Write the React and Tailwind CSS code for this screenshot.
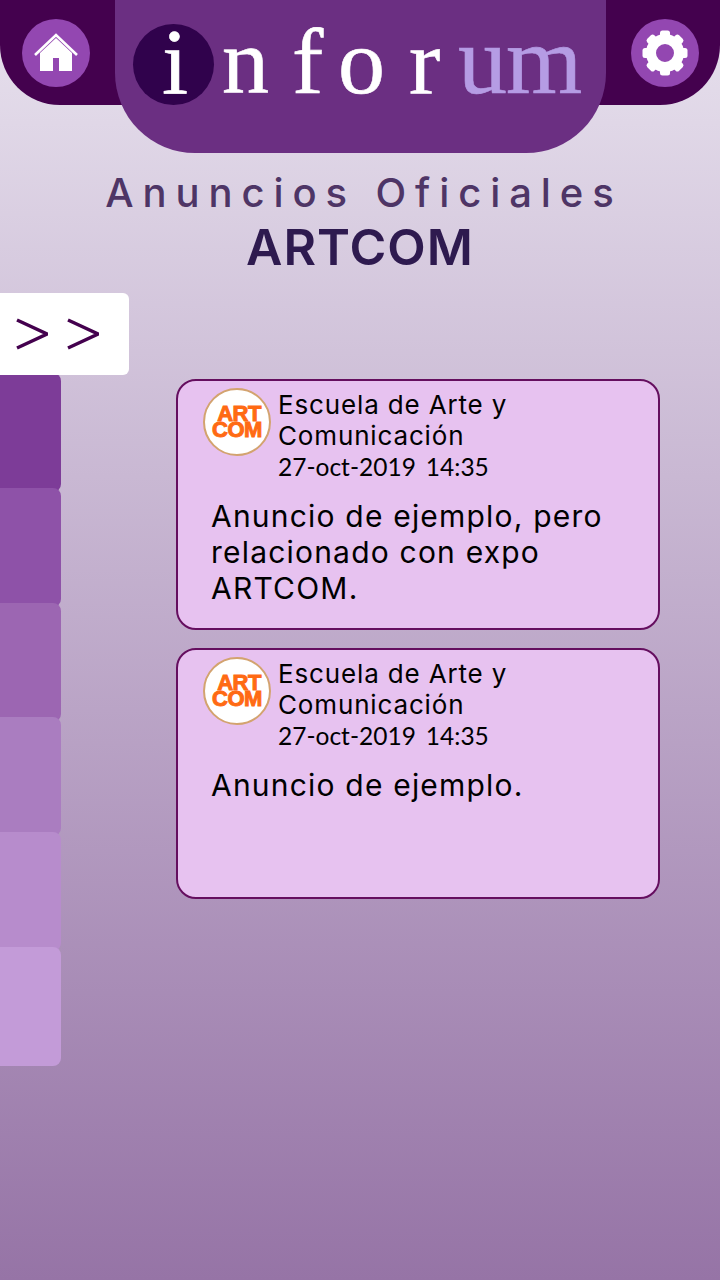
const sans = 'font-["Inter","Liberation_Sans",sans-serif]';

const tabs = ['bg-[#7d3c98]', 'bg-[#8e52a8]', 'bg-[#9c66b2]', 'bg-[#aa7dc0]', 'bg-[#b78ccc]', 'bg-[#c39bd8]'];

const HomeIcon = () => (
  <svg width="44" height="40" viewBox="0 0 44 40" fill="none">
    <path d="M1 22 L22 2 L43 22" stroke="white" strokeWidth="2.6" />
    <path d="M6 38 V20 L22 5 L38 20 V38 H25 V25 H19 V38 Z" fill="white" />
  </svg>
);

const GearIcon = () => (
  <svg width="46" height="46" viewBox="-23 -23 46 46">
    <circle r="14" fill="none" stroke="white" strokeWidth="10" />
    {[0, 45, 90, 135, 180, 225, 270, 315].map((angle) => (
      <rect key={angle} x="-5" y="-22.5" width="10" height="9" rx="2.5" fill="white" transform={`rotate(${angle})`} />
    ))}
  </svg>
);

const Chevron = () => (
  <svg width="32" height="32" viewBox="0 0 32 32" fill="none" stroke="currentColor" strokeWidth="3.4">
    <path d="M1 2 L31 16 L1 30" />
  </svg>
);

const RoundButton = ({ children }) => (
  <div className="w-[68px] h-[68px] rounded-full bg-[#9347b1] flex items-center justify-center">
    {children}
  </div>
);

const Logo = () => (
  <div className="w-[68px] h-[68px] shrink-0 -mt-px rounded-full bg-white border-2 border-[#d3a36f] flex flex-col items-center justify-center font-['Liberation_Sans',sans-serif] font-bold text-[#ff6a13] text-[22px] leading-[16px] [-webkit-text-stroke:1px_#ff6a13]">
    <span className="ml-[4px] tracking-[-0.5px]">ART</span>
    <span className="tracking-[-0.5px]">COM</span>
  </div>
);

const Card = ({ text }) => (
  <div className="w-[484px] h-[251px] rounded-[20px] border-2 border-[#650e5f] bg-[#e7c2f0] pl-[25px] pt-[8px] text-black">
    <div className="flex gap-[7px]">
      <Logo />
      <div>
        <p className={`${sans} text-[26px] leading-[31px] tracking-[0.85px] w-[260px]`}>Escuela de Arte y Comunicación</p>
        <p className="font-['Lato',sans-serif] text-[24.5px] leading-[31px] flex gap-[10px]">
          <span>27-oct-2019</span>
          <span>14:35</span>
        </p>
      </div>
    </div>
    <p className={`${sans} text-[30px] leading-[36px] tracking-[1.2px] ml-[8px] mt-[16px] w-[430px]`}>{text}</p>
  </div>
);

export default function App() {
  return (
    <div className="relative w-[720px] h-[1280px] overflow-hidden bg-gradient-to-b from-[#e8e2ee] to-[#9674a6]">
      <div className="h-[105px] bg-[#44014e] rounded-b-[60px] flex items-start justify-between pt-[19px] pl-[22px] pr-[21px]">
        <RoundButton><HomeIcon /></RoundButton>
        <RoundButton><GearIcon /></RoundButton>
      </div>

      <div className="absolute top-0 left-[115px] w-[491px] h-[153px] rounded-b-[80px] bg-[#6b2f82] font-['Liberation_Serif',serif] text-[94px] leading-none text-white">
        <div className="absolute left-[18px] top-[24px] w-[81px] h-[81px] rounded-full bg-[#30024c]" />
        <div className="relative flex items-baseline pl-[47px] pt-[11px] [-webkit-text-stroke:0.6px_currentColor]">
          <span className="w-[60px]">i</span>
          <span className="w-[70px]">n</span>
          <span className="w-[46px]">f</span>
          <span className="w-[71px]">o</span>
          <span className="w-[49px]">r</span>
          <span className="text-[#b59ce4] text-[98px] tracking-[-1px]">um</span>
        </div>
      </div>

      <div className="pt-[63px] text-center">
        <h1 className={`${sans} text-[40px] leading-[50px] font-medium text-[#4e3566] tracking-[8.9px] pl-[8px]`}>Anuncios Oficiales</h1>
        <h2 className={`${sans} text-[50px] leading-[58px] font-semibold text-[#2e1a4f] tracking-[1px]`}>ARTCOM</h2>
      </div>

      <div className="flex mt-[17px]">
        <div className="w-[176px] shrink-0">
          <div className="relative z-10 w-[129px] h-[82px] bg-white rounded-r-[6px] flex items-center gap-[19px] pl-[16px] text-[#44014e]">
            <Chevron />
            <Chevron />
          </div>
          <div className="-mt-[2px]">
            {tabs.map((color) => (
              <div key={color} className={`w-[61px] h-[119px] -mb-[4.2px] rounded-[8px] rounded-l-none ${color}`} />
            ))}
          </div>
        </div>
        <div className="flex flex-col gap-[18px] pt-[86px]">
          <Card text="Anuncio de ejemplo, pero relacionado con expo ARTCOM." />
          <Card text="Anuncio de ejemplo." />
        </div>
      </div>
    </div>
  );
}
